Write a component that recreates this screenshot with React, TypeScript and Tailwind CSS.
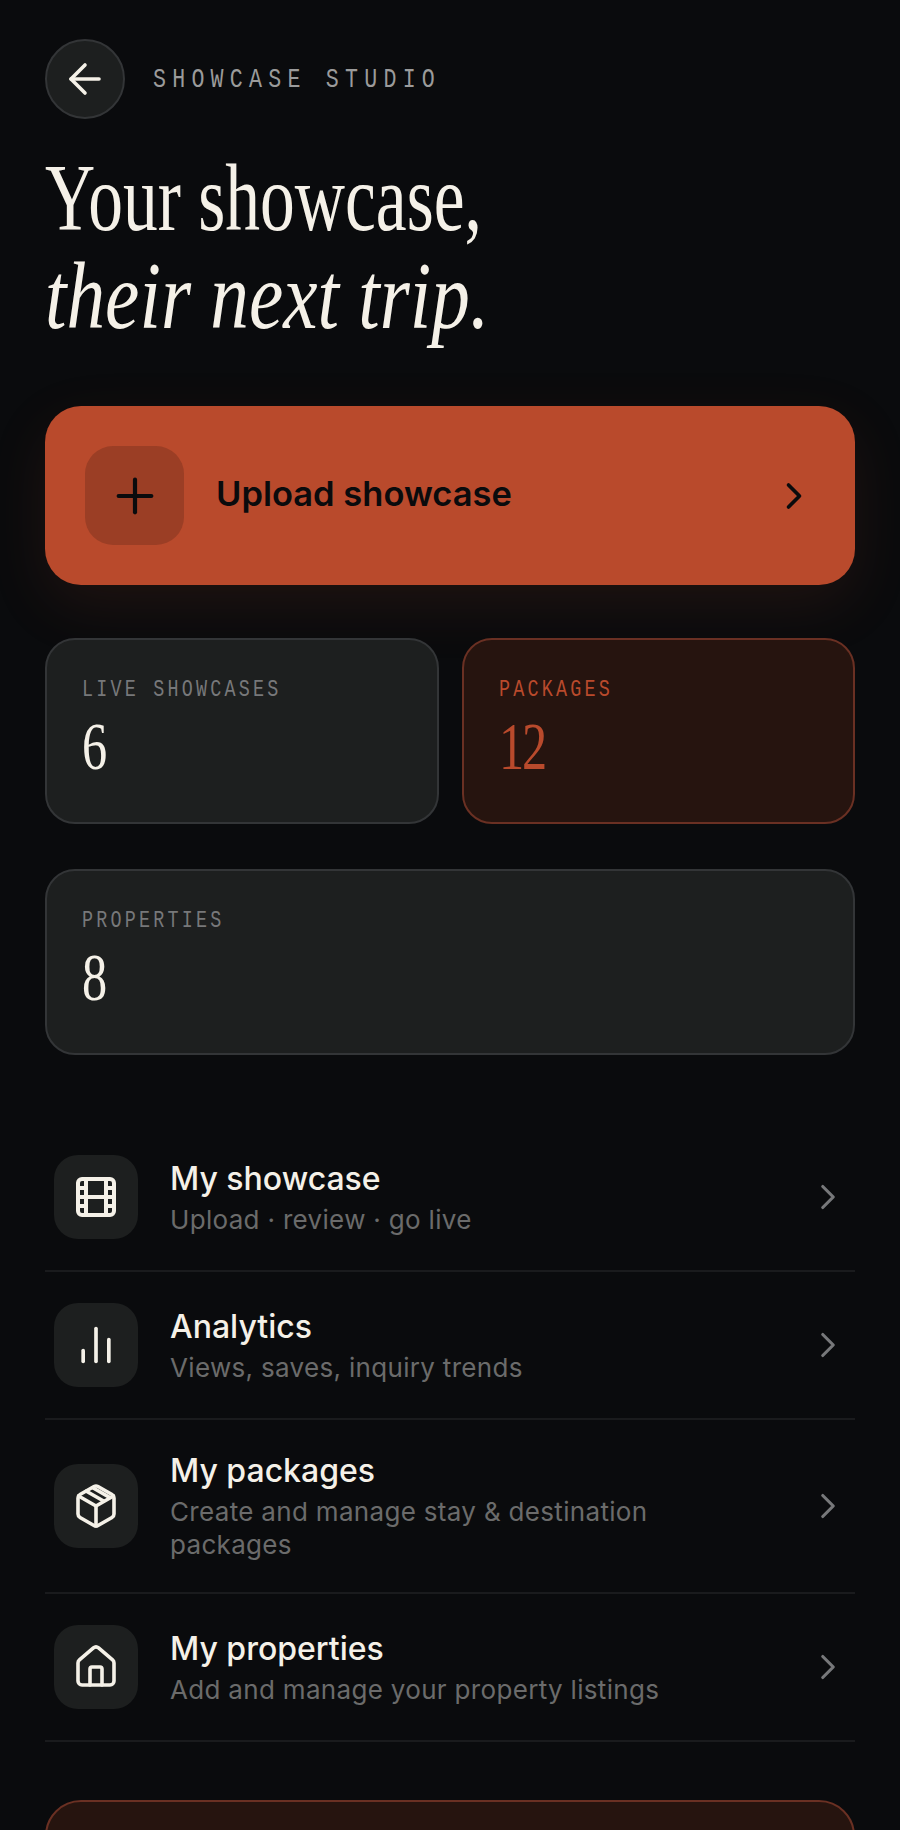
import { ArrowLeft, ChartNoAxesColumn, ChevronRight, Film, House, Plus } from 'lucide-react'
import type { ReactNode } from 'react'

const sans = "font-['Inter',sans-serif]"
const mono = "font-['Liberation_Mono',monospace]"
const serif = "font-['Liberation_Serif',serif]"

function BoxIcon() {
  return (
    <svg width="48" height="48" viewBox="0 0 24 24" fill="none" stroke="currentColor" strokeWidth="1.8" strokeLinecap="round" strokeLinejoin="round">
      <path d="M11 21.73a2 2 0 0 0 2 0l7-4A2 2 0 0 0 21 16V8a2 2 0 0 0-1-1.73l-7-4a2 2 0 0 0-2 0l-7 4A2 2 0 0 0 3 8v8a2 2 0 0 0 1 1.73z" />
      <path d="M12 22V12" />
      <path d="M3.29 7 12 12l8.71-5" />
      <path d="m7.2 4.6 8.6 4.9" />
      <path d="m10.4 2.9 8.4 4.8" />
    </svg>
  )
}

const ROWS: { icon: ReactNode; title: string; sub: string }[] = [
  { icon: <Film size={48} strokeWidth={2} />, title: 'My showcase', sub: 'Upload · review · go live' },
  { icon: <ChartNoAxesColumn size={44} strokeWidth={2} />, title: 'Analytics', sub: 'Views, saves, inquiry trends' },
  { icon: <BoxIcon />, title: 'My packages', sub: 'Create and manage stay & destination packages' },
  { icon: <House size={48} strokeWidth={1.8} />, title: 'My properties', sub: 'Add and manage your property listings' }
]

function Stat({ label, value, hot }: { label: string; value: string; hot?: boolean }) {
  return (
    <div
      className={`h-[186px] rounded-[30px] border-2 px-[35px] pt-[38px] ${hot ? 'border-[#6a3023] bg-[#26140f] text-[#b94a2c]' : 'border-[#333537] bg-[#1d1f1f] text-[#f5f1e8]'}`}
    >
      <div className={`${mono} origin-left scale-x-[0.8] text-[23px] leading-[24px] tracking-[4px] ${hot ? '' : 'text-[#77787a]'}`}>{label}</div>
      <div className={`${serif} mt-[9px] origin-left scale-x-[0.74] text-[68px] leading-[70px] tracking-[-3px]`}>{value}</div>
    </div>
  )
}

function Row({ icon, title, sub }: { icon: ReactNode; title: string; sub: string }) {
  return (
    <div className="flex items-center border-b-2 border-[#1a1b1d] py-[31px] pl-[9px] pr-[6px]">
      <div className="flex h-[84px] w-[84px] shrink-0 items-center justify-center rounded-[24px] bg-[#1d1f1f] text-[#f5f1e8]">
        {icon}
      </div>
      <div className="ml-[32px] w-[520px]">
        <div className="text-[32px] leading-[40px] font-medium text-[#f5f1e8]">{title}</div>
        <div className="mt-[4px] text-[26px] leading-[33px] tracking-[0.32px] text-[#6b6b6b]">{sub}</div>
      </div>
      <ChevronRight size={42} strokeWidth={1.8} className="ml-auto text-[#77787a]" />
    </div>
  )
}

export default function App() {
  return (
    <div className={`${sans} h-[1830px] overflow-hidden bg-[#0a0b0d] px-[45px] pt-[39px]`}>
      <div className="flex items-center gap-[28px]">
        <div className="flex h-[80px] w-[80px] items-center justify-center rounded-full border-2 border-[#333537] bg-[#1d1f1f] text-[#f5f1e8]">
          <ArrowLeft size={48} strokeWidth={1.8} />
        </div>
        <div className={`${mono} origin-left scale-x-[0.8] pt-[3px] text-[27px] tracking-[7.8px] text-[#9b9b9b]`}>SHOWCASE STUDIO</div>
      </div>

      <h1 className={`${serif} mt-[30px] text-[96px] leading-[98px] font-normal text-[#f5f1e8]`}>
        <span className="block origin-left scale-x-[0.724]">Your showcase,</span>
        <em className="block origin-left scale-x-[0.805]">their next trip.</em>
      </h1>

      <div className="mt-[61px] flex h-[179px] items-center rounded-[36px] bg-[#b94a2c] pl-[40px] pr-[39px] text-[#0a0b0d] shadow-[0_20px_60px_rgba(185,74,44,0.12)]">
        <div className="flex h-[99px] w-[99px] items-center justify-center rounded-[28px] bg-[#9b3e25]">
          <Plus size={56} strokeWidth={1.8} />
        </div>
        <div className="ml-[32px] pb-[3px] text-[34.5px] font-semibold">Upload showcase</div>
        <ChevronRight size={44} strokeWidth={2} className="ml-auto" />
      </div>

      <div className="mt-[53px] grid grid-cols-2 gap-[23px]">
        <Stat label="LIVE SHOWCASES" value="6" />
        <Stat label="PACKAGES" value="12" hot />
      </div>
      <div className="mt-[45px]">
        <Stat label="PROPERTIES" value="8" />
      </div>

      <div className="mt-[69px]">
        {ROWS.map((r) => (
          <Row key={r.title} {...r} />
        ))}
      </div>

      <div className="mt-[58px] h-[200px] rounded-[36px] border-2 border-[#6a3023] bg-[#26140f]" />
    </div>
  )
}
